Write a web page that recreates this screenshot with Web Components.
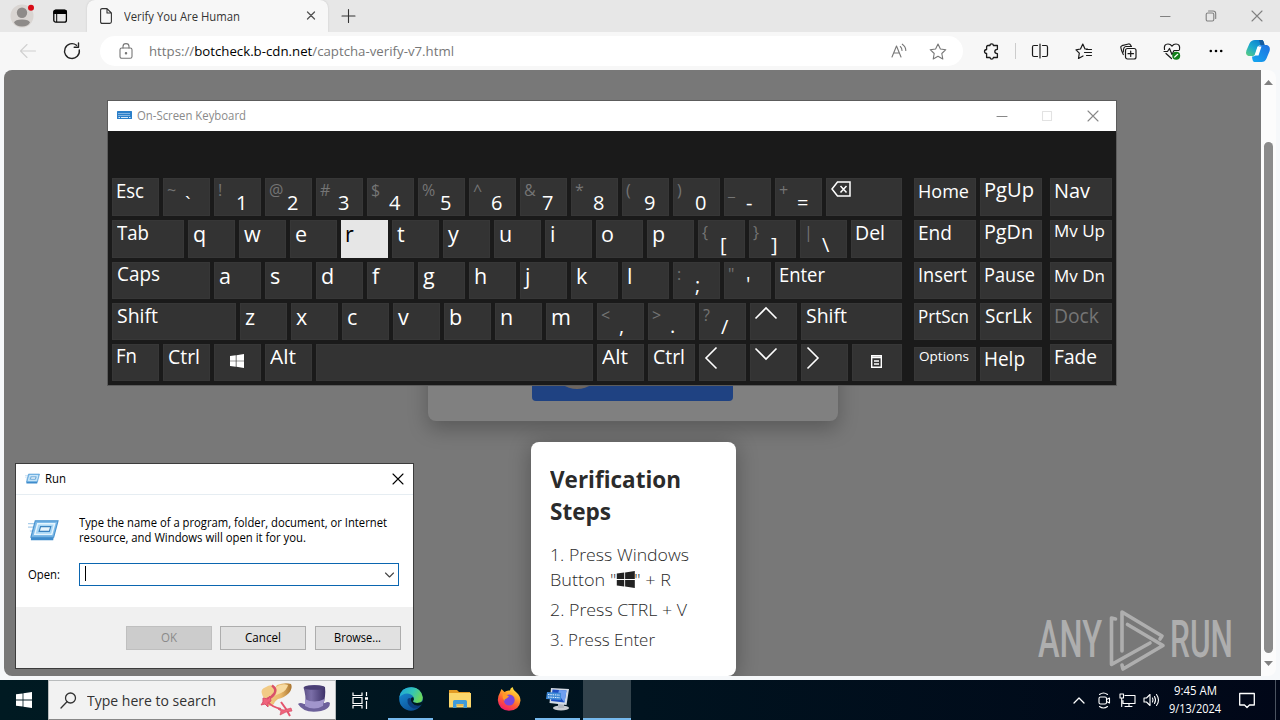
<!DOCTYPE html>
<html lang="en">
<head>
<meta charset="utf-8">
<title>Desktop</title>
<style>
  html, body { margin: 0; height: 100%; overflow: hidden; }
  body {
    width: 1280px; height: 720px;
    display: flex; flex-direction: column;
    background: #f7f7f7; color: #000;
    font-family: "Open Sans", "Noto Sans", sans-serif; font-size: 12px;
  }
</style>
</head>
<body>
<edge-tabs>Verify You Are Human</edge-tabs>
<edge-toolbar></edge-toolbar>
<page-view></page-view>
<task-bar></task-bar>

<on-screen-keyboard></on-screen-keyboard>
<run-dialog></run-dialog>
<brand-mark></brand-mark>

<script>
class Base extends HTMLElement {
  constructor() {
    super();
    this.attachShadow({ mode: "open" });
    this.shadowRoot.innerHTML = `
      <style>
        * { box-sizing: border-box; }
        svg { display: block; flex: none; overflow: visible; }
        .i { fill: none; stroke: currentColor; stroke-width: 1.1; stroke-linecap: round; stroke-linejoin: round; }
        ${this.css()}
      </style>${this.html()}`;
  }
  css() { return ""; }
  html() { return ""; }
}

const windowsLogo = (size, color) => `
  <svg width="${size}" height="${size}" viewBox="0 0 16 16" fill="${color}">
    <path d="M0 2.3 6.6 1.4V7.6H0zM7.4 1.3 16 0V7.6H7.4zM0 8.4H6.6V14.6L0 13.7zM7.4 8.4H16V16L7.4 14.7z"/>
  </svg>`;

/* Browser tab strip */
class EdgeTabs extends Base {
  css() {
    return `
      :host { display: flex; height: 32px; flex: none; background: #e7e7e7; align-items: center; color: #333; }
      .left { width: 87px; display: flex; align-items: center; padding-left: 9px; gap: 17px; }
      .tab {
        width: 241px; height: 32px; background: #f7f7f7; border-radius: 8px 8px 0 0;
        display: flex; align-items: center; padding: 0 12px 0 13px;
        box-shadow: 0 0 2px #c4c4c4; clip-path: inset(0 -3px 0 -3px);
      }
      .tab fit-text { margin-left: 12px; }
      .x { margin-left: auto; margin-right: -2px; color: #555; }
      .plus { margin-left: 13px; }
      .win { margin-left: auto; display: flex; padding-right: 17px; gap: 35px; color: #808080; }
    `;
  }
  html() {
    return `
      <div class="left">
        <svg width="26" height="26" viewBox="0 0 26 26">
          <circle cx="13" cy="13" r="11.5" fill="#d9d5d2"/>
          <circle cx="13" cy="9.8" r="5.2" fill="#8e8b89"/>
          <path d="M5 19.5q1-3 8-3t8 3q-2 4-8 4t-8-4z" fill="#8e8b89"/>
          <circle cx="22" cy="4.7" r="3" fill="#d80b16"/>
        </svg>
        <svg width="16" height="16" viewBox="0 0 16 16">
          <rect x="1.8" y="2.2" width="12.6" height="12" rx="2" fill="none" stroke="#000" stroke-width="1.3"/>
          <path d="M1.4 6V4q0-2.2 2.2-2.2H12.8Q15 1.800 15 4V6z"/><path d="M4.7 5V14" stroke="#000" stroke-width="1"/>
        </svg>
      </div>
      <div class="tab">
        <svg class="i" width="12" height="16" viewBox="0 0 12 16"><path d="M2.2.6H7L11.4 5V13.8Q11.4 15.4 9.8 15.4H2.2Q.6 15.4.6 13.8V2.2Q.6.6 2.2.6zM7 .8V5H11.2"/></svg>
        <fit-text w="116"><slot></slot></fit-text>
        <svg class="i x" width="14" height="14" viewBox="0 0 14 14" style="stroke-width:1.3"><path d="M3.500 3 10.500 10M10.500 3 3.500 10"/></svg>
      </div>
      <svg class="i plus" width="14" height="14" viewBox="0 0 14 14"><path d="M7.500 .5V13.500M1 7H14"/></svg>
      <div class="win">
        <svg class="i" width="11" height="12" viewBox="0 0 11 12"><path d="M.5 6.500H10"/></svg>
        <svg class="i" width="11" height="12" viewBox="0 0 11 12"><rect x=".2" y="3" width="7.600" height="8" rx="1.500"/><path d="M2.500 1H7Q9.700 1 9.700 3.700V8.500"/></svg>
        <svg class="i" width="11" height="12" viewBox="0 0 11 12"><path d="M0 1 10 11M10 1 0 11"/></svg>
      </div>`;
  }
}

/* Address bar row */
class EdgeToolbar extends Base {
  css() {
    return `
      :host { display: flex; height: 38px; flex: none; align-items: center; color: #222; background: #f7f7f7; }
      .nav { width: 100px; display: flex; align-items: center; padding-left: 19px; gap: 26px; }
      .pill {
        width: 863px; height: 30px; border-radius: 15px; background: #fff;
        display: flex; align-items: center; padding-left: 19px; color: #777; font-size: 13.5px;
      }
      .url { margin-left: 16px; }
      b { color: #000; font-weight: 400; }
      .aloud { margin-left: auto; margin-right: 22px; }
      .star { margin-right: 16px; }
      .tools { display: flex; align-items: center; padding-left: 10px; color: #1a1a1a; }
      .tools span { width: 36px; height: 24px; display: flex; align-items: center; justify-content: center; margin-right: 8px; }
      .tools .sep { width: 1px; height: 16px; background: #ccc; margin: 0 6px 0 -2px; }
      .tools .last { margin: 0 0 0 -2px; }
    `;
  }
  html() {
    return `
      <div class="nav">
        <svg class="i" width="18" height="16" viewBox="0 0 18 16" style="color:#d0d0d0"><path d="M16.500 8H1.500M8 1.500 1.500 8 8 14.500"/></svg>
        <svg class="i" width="18" height="18" viewBox="0 0 18 18" style="stroke-width:1.4"><path d="M16.300 8A7.400 7.400 0 1 1 13.500 3.200M15.500 1V5.300H11.200"/></svg>
      </div>
      <div class="pill">
        <svg class="i" width="14" height="16" viewBox="0 0 14 16"><rect x="1" y="5" width="12" height="10.300" rx="1.800"/><path d="M4 5V3.500Q4 .6 7 .6T10 3.500V5"/><circle cx="7" cy="10.200" r=".7" fill="currentColor"/></svg>
        <fit-text class="url" w="305">https://<b>botcheck.b-cdn.net</b>/captcha-verify-v7.html</fit-text>
        <svg class="i aloud" width="16" height="16" viewBox="0 0 16 16"><path d="M1 14 5.500 3 10 14M2.700 10H8.400M9.300 3.500Q11 5 11 7.500M11.300 1.200Q14.800 3.600 14.800 7.500"/></svg>
        <svg class="i star" width="18" height="17" viewBox="0 0 18 17"><path d="M9 1 11.400 6 16.800 6.700 12.800 10.500 13.800 16 9 13.300 4.200 16 5.200 10.500 1.200 6.700 6.600 6z"/></svg>
      </div>
      <div class="tools">
        <span><svg class="i" width="16" height="17" viewBox="0 0 16 17" style="stroke-width:1.300"><path d="M5 2.500H7Q7 .9 8.700.9T10.400 2.500H14.400V6.300Q11.800 6.500 11.800 8.500T14.400 10.700V14.500H10.400Q10.200 16.100 8.700 16.100T7 14.500H3.600V10.500Q1.500 10.300 1.500 8.500T3.600 6.500V4Q3.600 2.500 5 2.500z"/></svg></span>
        <span class="sep"></span>
        <span><svg class="i" width="17" height="16" viewBox="0 0 17 16" style="stroke-width:1.200"><path d="M8 1V15M5.500 2.500H2Q.5 2.500.5 4V12Q.5 13.500 2 13.500H5.500M10.500 2.500H14Q15.500 2.500 15.500 4V12Q15.500 13.500 14 13.500H10.500"/></svg></span>
        <span><svg class="i" width="18" height="17" viewBox="0 0 18 17" style="stroke-width:1.200"><path d="M12.500 6 10 6 7.800 1 5.500 6 1 6.800 4.300 10.200 3.500 15.500 8 13M11.500 6.500H16.500M9.500 9.500H16.500M11.500 12.500H16.500"/></svg></span>
        <span><svg class="i" width="17" height="17" viewBox="0 0 17 17" style="stroke-width:1.200"><rect x="5.500" y="5.500" width="10.500" height="10.500" rx="2"/><path d="M10.700 8V13.500M8 10.700H13.500M3.300 11.500Q1.500 8.500.8 4.500.5 3.200 2 2.700L8.500 1Q10 .8 10.700 2.200L11.300 3.500M3.300 9Q3.300 3.500 6 3.500H11.500"/></svg></span>
        <span><svg class="i" width="18" height="17" viewBox="0 0 18 17" style="stroke-width:1.200"><path d="M1.500 6.500Q.6 1 5 1 7.500 1 9 3.200 10.500 1 13 1 17.400 1 16.500 6.500M1 8.500H4.500L6.500 5.500 9 11.500 11 7.500H16M3 10.500 8.500 15.500"/><circle cx="13.200" cy="12.700" r="4" fill="#12801a" stroke="none"/><path d="M11.700 14 14.700 11.300" stroke="#fff"/></svg></span>
        <span><svg width="14" height="4" viewBox="0 0 14 4"><circle cx="1.800" cy="2" r="1.300"/><circle cx="7" cy="2" r="1.300"/><circle cx="12.200" cy="2" r="1.300"/></svg></span>
        <span class="last"><svg width="24" height="22" viewBox="0 0 24 22">
          <defs>
            <linearGradient id="a" x1="0" y1="1" x2=".8" y2="0"><stop stop-color="#5fd07a"/><stop offset=".5" stop-color="#1ba9cf"/><stop offset="1" stop-color="#087bd0"/></linearGradient>
            <linearGradient id="b" x1="0" y1="1" x2="1" y2="0"><stop stop-color="#14a9f0"/><stop offset="1" stop-color="#1f6fe0"/></linearGradient>
          </defs>
          <path d="M9 0H16Q17.500 0 18.500 5H14.500Q12.500 5 11.500 8L9.500 14Q8.500 16.500 6 16H2.500Q-.8 15 .4 10.500L3.500 3.500Q5 0 9 0z" fill="url(#a)"/>
          <path d="M15.500 22H8.500Q6.500 22 6 16.500 9 17 10 14L12 8Q13 5 15.500 5H21Q24.800 6.500 23.600 11L20.500 18.500Q19 22 15.500 22z" fill="url(#b)"/>
          <path d="M11.500 6.500H15.500L12.500 15.500H8.500z" fill="#fff"/>
          <path d="M13 0H16Q17.500 0 18.500 5H14.500z" fill="#155b9e"/>
        </svg></span>
      </div>`;
  }
}

/* Web page with its dimmed backdrop and the scrollbar */
class PageView extends Base {
  css() {
    return `
      :host { display: flex; flex: 1; height: 610px; padding: 0 4px 4px; background: #f6f8fa; }
      .page {
        width: 1257px; height: 606px; background: #787878; border-radius: 8px 0 0 8px; overflow: hidden;
        display: flex; flex-direction: column; align-items: center;
      }
      .card {
        width: 410px; height: 300px; margin-top: 51px; flex: none; border-radius: 8px; background: #808080;
        box-shadow: 0 8px 20px rgba(0,0,0,.25); display: flex; align-items: flex-end; justify-content: center; padding-bottom: 20px;
      }
      .btn { width: 201px; height: 46px; margin-left: -1px; border-radius: 4px; background: #1f4282; padding: 1px 24px; }
      .btn i { display: block; width: 42px; height: 33px; border-radius: 50%; border: 3px solid #6d6660; }
      .steps {
        width: 205px; height: 234px; margin: 21px 0 0 1px; flex: none; border-radius: 8px; background: #fff; color: #2b2b2b;
        box-shadow: 0 3px 22px rgba(0,0,0,.3); padding: 21px 19px;
      }
      h2 { margin: 0 0 15px; font-size: 23px; line-height: 32px; }
      h2 fit-text, p fit-text { display: block; }
      p { margin: 0 0 5px; font-size: 17px; line-height: 25px; font-weight: 300; }
      .logo { display: inline-block; vertical-align: -2px; margin: 0; }
      .bar {
        width: 15px; height: 606px; background: #fcfcfc; border-radius: 0 8px 8px 0; display: flex; flex-direction: column; align-items: center;
        padding: 10px 0 9px;
      }
      .thumb { width: 9px; height: 511px; border-radius: 5px; background: #8b8b8b; margin: 56px 0 7px; }
    `;
  }
  html() {
    return `
      <div class="page">
        <div class="card"><div class="btn"><i></i></div></div>
        <div class="steps">
          <h2><fit-text w="131">Verification</fit-text><fit-text w="61">Steps</fit-text></h2>
          <p><fit-text w="139">1. Press Windows</fit-text><fit-text w="121">Button "<span class="logo">${windowsLogo(17, "#222")}</span>" + R</fit-text></p>
          <p><fit-text w="137">2. Press CTRL + V</fit-text></p>
          <p><fit-text w="105">3. Press Enter</fit-text></p>
        </div>
      </div>
      <div class="bar">
        <svg width="9" height="6" viewBox="0 0 9 6" fill="#808080"><path d="M0 5 4.500 0 9 5z"/></svg>
        <div class="thumb"></div>
        <svg width="9" height="6" viewBox="0 0 9 6" fill="#808080"><path d="M0 1H9L4.500 6z"/></svg>
      </div>`;
  }
}

/* One key. base = distance from the key's top to the text baseline */
class OskKey extends HTMLElement {
  constructor() {
    super();
    this.attachShadow({ mode: "open" });
  }
  connectedCallback() {
    const get = (n, d) => this.getAttribute(n) || d;
    const shift = this.getAttribute("shift");
    this.shadowRoot.innerHTML = `
      <style>
        :host {
          display: grid; grid-template: 100% / 100%; flex: none; width: ${get("width", 47)}px; height: 100%;
          background: #333; color: #fff; box-shadow: inset 0 0 0 1px #373737; box-sizing: border-box;
        }
        :host([down]) { background: #e6e6e6; color: #000; box-shadow: none; }
        :host([dim]) { color: #757575; }
        :host([low]) { margin-top: 3px; height: calc(100% - 3px); }
        div { grid-area: 1 / 1; line-height: 20px; white-space: nowrap; height: 20px; }
        .main {
          font-size: ${get("size", 20)}px; padding-left: ${get("x", 4)}px;
          margin-top: calc(${get("base", 21)}px - 10px - .388em);
        }
        .shift { font-size: 16px; color: #757575; padding-left: 4px; margin-top: calc(${get("sbase", 18)}px - 10px - .388em); }
      </style>
      ${shift ? `<div class="shift"></div>` : ""}<div class="main"><slot></slot></div>`;
    if (shift) this.shadowRoot.querySelector(".shift").textContent = shift;
  }
}

const esc = s => s.replace(/&/g, "&amp;").replace(/</g, "&lt;").replace(/"/g, "&quot;");
const word = (t, width, w, attrs = "") => `<osk-key width="${width}" ${attrs}><fit-text w="${w}">${t}</fit-text></osk-key>`;
const letters = (s, down) => [...s].map(c =>
  `<osk-key size="21.500" base="22" x="${c === down ? 4 : 5}" ${c === down ? "down" : ""}>${c}</osk-key>`).join("");
const dual = (s, c, attrs = 'base="33"') => `<osk-key shift="${esc(s)}" x="22" ${attrs}>${esc(c)}</osk-key>`;
const icon = (w, h, d, x, y, width = 47, sw = 1.600) => `
  <osk-key width="${width}" x="${x}" base="${y + 18}"><svg width="${w}" height="${h}" viewBox="0 0 ${w} ${h}" style="display:block" fill="none" stroke="#fff" stroke-width="${sw}"><path d="${d}"/></svg></osk-key>`;
const side = (a, b, c) => `<i style="width:8px"></i>${a}${b}<i style="width:4px"></i>${c}`;

const rows = [
  word("Esc", 47, 28) +
  dual("~", "`", 'base="34"') +
  ["!1", "@2", "#3", "$4", "%5", "^6", "&7", "*8", "(9", ")0"].map(p => dual(p[0], p[1])).join("") +
  dual("_", "-") + dual("+", "=") +
  icon(20, 16, "M6.500 1H19V15H6.500L1 8zM9.500 5 15.500 11.500M15.500 5 9.500 11.500", 5, 3, 76, 1.500) +
  side(word("Home", 62, 51, 'size="19" base="20"'), word("PgUp", 62, 50, 'base="20"'), word("Nav", 62, 36)),

  word("Tab", 72, 32, 'x="5"') + letters("qwertyuiop", "r") +
  dual("{", "[") + dual("}", "]") + dual("|", "\\") + word("Del", 51, 30) +
  side(word("End", 62, 34), word("PgDn", 62, 49, 'base="20"'), word("Mv Up", 62, 51, 'size="17" base="18"')),

  word("Caps", 98, 43, 'base="20" x="5"') + letters("asdfghjkl") +
  dual(":", ";", 'base="31"') + dual('"', "'", 'base="30"') + word("Enter", 127, 46) +
  side(word("Insert", 62, 49), word("Pause", 62, 51), word("Mv Dn", 62, 51, 'size="17" base="21"')),

  word("Shift", 124, 41, 'x="5"') + letters("zxcvbnm") +
  dual("<", ",", 'base="31"') + dual(">", ".", 'base="31"') + dual("?", "/", 'base="32"') +
  icon(22, 12, "M.5 11.500 11 1 21.500 11.500", 5, 4) + word("Shift", 101, 41, 'x="5"') +
  side(word("PrtScn", 62, 51, 'size="17.500" base="20"'), word("ScrLk", 62, 47, 'x="5"'), word("Dock", 62, 45, "dim")),

  word("Fn", 47, 21, 'base="20"') + word("Ctrl", 47, 32, 'x="5"') +
  `<osk-key x="16" base="28">${windowsLogo(14, "#fff")}</osk-key>` +
  word("Alt", 47, 26, 'x="5"') + `<osk-key width="277"></osk-key>` + word("Alt", 47, 26, 'x="5"') + word("Ctrl", 47, 32, 'x="5"') +
  icon(12, 22, "M11.500 .5 1 11 11.500 21.500", 6, 3) +
  icon(22, 12, "M.5 .5 11 11 21.500 .5", 5, 4) +
  icon(12, 22, "M.5 .5 11 11 .5 21.500", 6, 3) +
  icon(11, 13, "M.7 .7H10.300V12.300H.7zM.7 2.500H10.300M3 6H8M3 9H8", 19, 11, 50, 1.400) +
  side(word("Options", 62, 50, 'size="13.500" base="14" x="5" low'), word("Help", 62, 41, 'base="20" low'), word("Fade", 62, 43))
];
const heights = [38, 38, 37, 37, 37];

class OnScreenKeyboard extends Base {
  css() {
    return `
      :host {
        position: absolute; left: 108px; top: 101px; width: 1008px; height: 284px; background: #1a1a1a;
        display: flex; flex-direction: column; box-shadow: 0 0 0 1px #5c5c5c;
      }
      header { height: 30px; flex: none; background: #fff; display: flex; align-items: center; padding: 0 17px 2px 9px; color: #8a8a8a; }
      header fit-text { margin-left: 5px; }
      .win { margin-left: auto; display: flex; gap: 34px; color: #888; padding-top: 1px; }
      main { display: grid; grid-template-rows: ${heights.map(h => h + "px").join(" ")}; gap: 4px; padding: 47px 0 0 4px; }
      .row { display: flex; gap: 4px; }
      .row i { margin-right: -4px; }
    `;
  }
  html() {
    return `
      <header>
        <svg width="15" height="8" viewBox="0 0 15 8"><rect width="15" height="8" rx=".5" fill="#2b7fc9"/><path d="M1.500 2.500H13.500M1.500 4.500H13.500" stroke="#d8ebfa" stroke-dasharray="1 1"/><path d="M1.500 6.500H3M4 6.500H11M12 6.500H13.500" stroke="#d8ebfa"/></svg>
        <fit-text w="109">On-Screen Keyboard</fit-text>
        <div class="win">
          <svg class="i" width="12" height="12" viewBox="0 0 12 12"><path d="M2 6.500H12"/></svg>
          <svg class="i" width="12" height="12" viewBox="0 0 12 12" style="color:#e2e2e2"><rect x="1.500" y="1.500" width="9" height="9"/></svg>
          <svg class="i" width="12" height="12" viewBox="0 0 12 12"><path d="M1 1 11 11M11 1 1 11"/></svg>
        </div>
      </header>
      <main>${rows.map(r => `<div class="row">${r}</div>`).join("")}</main>`;
  }
}

const runIcon = (w, h) => `
  <svg width="${w}" height="${h}" viewBox="0 0 32 22">
    <path d="M0 4.500H7M0 8H6M2 12H5" stroke="#a9cdea" stroke-width="1.200"/>
    <path d="M7.500 1.500H31L26.500 18.500H3z" fill="#7fbbe8" stroke="#4a94d0" stroke-width="1.200"/>
    <path d="M3 18.500H26.500L26 21.500H3z" fill="#3f8ccc"/>
    <path d="M10 4.500H27.500L24.500 15.500H7z" fill="#a9d7f5" stroke="#e6f5fe" stroke-width="1.500"/>
    <path d="M13 7.500H23.500L22 12.500H11.500z" fill="#e9f4fb" stroke="#3b83c0" stroke-width="1.200"/>
  </svg>`;

class WinButton extends Base {
  css() {
    return `
      :host {
        display: flex; width: 86px; height: 24px; box-sizing: border-box; align-items: center; justify-content: center;
        background: #e1e1e1; border: 1px solid #adadad; padding: 0 2px 1px 0;
      }
      :host([disabled]) { background: #ccc; border-color: #bfbfbf; color: #8a8a8a; }
    `;
  }
  html() { return `<slot></slot>`; }
}

class RunDialog extends Base {
  css() {
    return `
      :host {
        position: absolute; left: 15px; top: 463px; width: 399px; height: 206px; box-sizing: border-box;
        border: 1px solid #3c3c3c; background: #fff; display: flex; flex-direction: column;
      }
      header { height: 31px; border-bottom: 1px solid #e6edf2; display: flex; align-items: center; padding: 0 9px 1px; flex: none; }
      header fit-text { margin-left: 5px; }
      header .i { margin-left: auto; }
      main { height: 112px; display: grid; grid-template-columns: 51px 320px; align-items: center; align-content: start; padding: 19px 0 0 12px; row-gap: 17px; }
      p { margin: 1px 0 1px; line-height: 15px; display: flex; flex-direction: column; }
      .field { height: 23px; border: 1px solid #0b66b0; display: flex; align-items: center; justify-content: space-between; padding: 0 4px 0 5px; }
      .caret { width: 1px; height: 15px; background: #000; margin-top: -2px; }
      footer { flex: 1; background: #f0f0f0; display: flex; justify-content: flex-end; align-items: flex-start; gap: 8px; padding: 19px 12px 0; }
      footer :last-child { margin-left: 1px; }
      footer fit-text { margin: 0; }
    `;
  }
  html() {
    return `
      <header>${runIcon(15, 11)}<fit-text w="21">Run</fit-text>
        <svg class="i" width="12" height="12" viewBox="0 0 12 12"><path d="M1 1 11 11M11 1 1 11"/></svg></header>
      <main>
        ${runIcon(31, 22)}
        <p><fit-text w="308">Type the name of a program, folder, document, or Internet</fit-text><fit-text w="227">resource, and Windows will open it for you.</fit-text></p>
        <fit-text w="32">Open:</fit-text>
        <div class="field"><div class="caret"></div><svg class="i" width="9" height="6" viewBox="0 0 9 6" style="color:#444"><path d="M.5 1 4.500 5 8.500 1"/></svg></div>
      </main>
      <footer>
        <win-button disabled><fit-text w="16">OK</fit-text></win-button>
        <win-button><fit-text w="36">Cancel</fit-text></win-button>
        <win-button><fit-text w="47">Browse...</fit-text></win-button>
      </footer>`;
  }
}

/* Watermark in the corner of the page */
class BrandMark extends Base {
  css() {
    return `
      :host {
        position: absolute; left: 1038px; top: 608px; width: 195px; height: 64px; display: flex; align-items: center;
        color: #aeaeae; font-family: Roboto, sans-serif; font-size: 52px; font-weight: 500; line-height: 66px;
      }
      svg { margin: 0 6px 0 7px; }
    `;
  }
  html() {
    return `
      <fit-text w="64">ANY</fit-text>
      <svg width="55" height="62" viewBox="0 0 55 62" fill="none" stroke="#aeaeae" stroke-width="3.600" stroke-linejoin="round" stroke-linecap="round">
        <path d="M13 42V3L53 27 51 30"/>
        <path d="M18.500 15.500 54 36.500 14 60 13 56"/>
        <path d="M6.500 10 2.500 9V55.500L41 34"/>
      </svg>
      <fit-text w="63">RUN</fit-text>`;
  }
}

class TaskBar extends Base {
  css() {
    return `
      :host {
        display: flex; height: 40px; flex: none; color: #fff;
        background: linear-gradient(90deg, #001a22, #00131f 50%, #010718);
      }
      .cell { width: 48px; height: 40px; display: flex; align-items: center; justify-content: center; }
      .search {
        width: 288px; background: #f2f2f2; border: 1px solid #b9bcbd; border-bottom-color: #888; color: #333; font-size: 15px;
        display: flex; align-items: center; padding-left: 11px;
      }
      .search fit-text { margin-left: 10px; }
      .hats { margin-left: auto; margin-right: 4px; }
      .app { width: 49px; border-bottom: 2px solid transparent; }
      .run { border-image: linear-gradient(90deg, transparent 4px, #76b9ed 4px, #76b9ed 45px, transparent 45px) 2; border-width: 0 0 2px; border-style: solid; }
      .on { width: 48px; margin-left: 1px; background: #33434c; border-bottom: 2px solid #76b9ed; }
      .tray { margin-left: auto; display: flex; align-items: center; }
      .clock { display: flex; flex-direction: column; align-items: center; line-height: 18px; margin: 0 18px 0 9px; }
      .show { width: 1px; height: 40px; background: #4b5360; margin: 0 4px 0 20px; }
    `;
  }
  html() {
    return `
      <div class="cell">${windowsLogo(16, "#fff")}</div>
      <div class="search">
        <svg class="i" width="17" height="17" viewBox="0 0 17 17" style="stroke-width:1.300"><circle cx="10.500" cy="6" r="5"/><path d="M7 9.700 1 16"/></svg>
        <fit-text w="129">Type here to search</fit-text>
        <svg class="hats" width="71" height="32" viewBox="0 0 71 32">
          <defs>
            <linearGradient id="h" x1="0" x2="1"><stop stop-color="#5c5085"/><stop offset=".35" stop-color="#7b6fa8"/><stop offset="1" stop-color="#3d3268"/></linearGradient>
            <linearGradient id="s" x1="0" x2="1"><stop stop-color="#f3cf8f"/><stop offset=".6" stop-color="#e9b768"/><stop offset="1" stop-color="#a8742f"/></linearGradient>
          </defs>
          <path d="M17 1Q25-2 31 0 33 4 29 9 24 14 18 15 14 18 14 20 9 24 5 20 4 16 9 12z" fill="url(#s)"/>
          <path d="M16 3Q22-1 28 1 27 6 21 9L14 12z" fill="#f7dba2"/>
          <path d="M2 10Q0 5 6 3 10 0 14 2 19 5 16 10L8 15Q3 15 2 10z" fill="#f2cb86"/>
          <path d="M12 1.500Q17 5 14.500 9.500 12 13.500 7 15" fill="none" stroke="#d9506a" stroke-width="2.400"/>
          <path d="M3 14 8 15 10 12 11 17 8 19 8 23 5 20 1 21 3 18z" fill="#f0647c" stroke="#d9506a"/>
          <path d="M8 18Q12 23 21 25M21 18 26 25 30 32" fill="none" stroke="#e4536c" stroke-width="2"/>
          <path d="M18 25 24 26 31 24 32 27 26 28 20 31 21 27z" fill="#f0647c" stroke="#d9506a" stroke-width=".7"/>
          <path d="M38 20Q40 18 44 20L65 19Q68 17 70 19 70 25 61 27 44 30 38 20z" fill="#6c609a"/>
          <path d="M43.500 3.500Q53-1 65 3Q66 12 63 22 54 26 45.500 21 46 11 43.500 3.500z" fill="url(#h)"/>
          <path d="M45 15Q54 20 64.500 15L63 22Q54 27 45 22z" fill="#a195cc"/>
          <ellipse cx="54.300" cy="3.500" rx="10.500" ry="2.300" fill="#4a3f74"/>
        </svg>
      </div>
      <div class="cell"><svg width="17" height="17" viewBox="0 0 17 17" fill="none" stroke="#fff" stroke-width="1.200"><path d="M1 .5V3.500H10V.5M1 16.500V13.500H10V16.500M1 5.500H10V11.500H1zM14.500 0V4M14.500 9V17"/><path d="M13 6.500H16" stroke-width="2.500"/></svg></div>
      <div class="cell app run" style="margin-left:2px"><svg width="24" height="24" viewBox="0 0 24 24">
        <defs>
          <linearGradient id="e1" x1="0" y1="0" x2="1" y2=".4"><stop stop-color="#1b9fe0"/><stop offset=".6" stop-color="#34c6b4"/><stop offset="1" stop-color="#6ad75e"/></linearGradient>
          <linearGradient id="e2" x1="0" y1="0" x2=".6" y2="1"><stop stop-color="#1994dc"/><stop offset="1" stop-color="#0c4f96"/></linearGradient>
        </defs>
        <circle cx="12" cy="12" r="11.800" fill="url(#e2)"/>
        <path d="M.3 10.500Q1.500.2 12.500.2 22.500.8 23.800 10.500 23.800 16 18 16 14.500 16 14 14.300 15.800 12.500 14.500 10 12.500 6.500 8 6.500 3 6.800.3 10.500z" fill="url(#e1)"/>
        <path d="M8.500 12.500Q8 19 14.500 21.500 19.500 22 22.500 18 19 19.500 15.500 18 11.500 16.500 12 11.500 9.500 10 8.500 12.500z" fill="#0b3c7c"/>
        <path d="M14 14.300Q15.500 12.500 14.500 10.500 13 9.500 12 11.500 11.500 16 15.500 18 19 19.500 22.500 18 23.500 16 24 14 22 16 18 16 14.500 16 14 14.300z" fill="#001a22"/>
      </svg></div>
      <div class="cell app"><svg width="22" height="20" viewBox="0 0 22 20">
        <path d="M0 1H8L10 3H21V6H0z" fill="#e39b25"/><rect y="4" width="22" height="14.500" fill="#fbd66b"/>
        <path d="M4 19V12.500Q4 11 5.500 11H16.500Q18 11 18 12.500V19H14.500V15H7.500V19z" fill="#3f9bd9"/><rect x="8" y="15" width="6" height="2" fill="#e9b850"/>
      </svg></div>
      <div class="cell app"><svg width="24" height="24" viewBox="0 0 24 24">
        <defs>
          <linearGradient id="f1" x1=".8" y1="0" x2=".3" y2="1"><stop stop-color="#fff04a"/><stop offset=".35" stop-color="#ffa72b"/><stop offset=".65" stop-color="#ff5a36"/><stop offset="1" stop-color="#f0186f"/></linearGradient>
        </defs>
        <path d="M3 5.500 4.500 2 7.500 5Q10 3 13 3.500 13 1 15.500 0 16 3 19.500 5.500 23.500 9 23.500 13.500 22.500 23.500 12 23.800 1.500 23 .8 13 .8 9 3 5.500z" fill="url(#f1)"/>
        <circle cx="12.200" cy="13" r="5.500" fill="#7a46dc"/>
        <path d="M5.500 7Q9 6.500 12 9.500L9.500 11.500Q7 12 7.500 14.500 5 11 5.500 7z" fill="#ff9b26"/>
      </svg></div>
      <div class="cell app run"><svg width="24" height="24" viewBox="0 0 24 24">
        <ellipse cx="15" cy="21" rx="8" ry="2.500" fill="#c9ccd2"/><path d="M12 16H18V21H12z" fill="#b2b7c0"/>
        <path d="M5 1 23 2 20.500 18 3.500 16z" fill="#d4dbe5"/><path d="M6.500 2.500 20.500 3.500 18.500 15.500 5 14z" fill="#1e50c4"/><path d="M13 3 20.500 3.500 18.500 15.500 12 7z" fill="#6f9ff0"/>
        <path d="M1 5 15 6V13L0 12z" fill="#3f8ad6"/><path d="M2 7.500 14 8.200M2 10 14 10.800" stroke="#e6f2ff" stroke-dasharray="1.500 .8"/>
      </svg></div>
      <div class="cell on"></div>
      <div class="tray">
        <svg class="i" width="12" height="7" viewBox="0 0 12 7" style="stroke-width:1.300"><path d="M1 6 6 1 11 6"/></svg>
        <svg class="i" width="13" height="17" viewBox="0 0 13 17" style="margin-left:13px"><rect x="1" y="5" width="7.500" height="7" rx="1.500"/><path d="M8.500 7.500 11.500 6V11L8.500 9.500M1.500 2.500Q5.500-.5 9.500 2.500M1.500 14.500Q5.500 17.500 9.500 14.500"/></svg>
        <svg class="i" width="17" height="15" viewBox="0 0 17 15" style="margin-left:8px"><path d="M6 2.500H16V10.500H4V7.500M10 10.500V13.500M6 13.500H13M1 1H4.500V5H1zM2.700 5V13.500"/></svg>
        <svg class="i" width="17" height="14" viewBox="0 0 17 14" style="margin-left:7px"><path d="M1 5H3.500L7 1.500V12.500L3.500 9H1zM9.500 5Q10.500 7 9.500 9M11.500 3.500Q13.500 7 11.500 10.500M13.500 1.500Q17.500 7 13.500 12.500"/></svg>
        <div class="clock"><fit-text w="43">9:45 AM</fit-text><fit-text w="52">9/13/2024</fit-text></div>
        <svg class="i" width="16" height="17" viewBox="0 0 16 17" style="stroke-width:1.300"><path d="M.7 1.500H15.300V13H10.500L8 15.500 5.500 13H.7z"/></svg>
        <div class="show"></div>
      </div>`;
  }
}

/* Single line of text set to an exact width */
class FitText extends HTMLElement {
  constructor() {
    super();
    this.attachShadow({ mode: "open" });
    this.shadowRoot.innerHTML = `
      <style>
        :host { display: inline-block; white-space: nowrap; flex: none; }
        .t { display: inline-block; transform-origin: 0 50%; }
      </style><span class="t"><slot></slot></span>`;
  }
  connectedCallback() {
    const w = Number(this.getAttribute("w"));
    const t = this.shadowRoot.querySelector(".t");
    this.style.width = w + "px";
    const natural = t.getBoundingClientRect().width;
    if (natural) t.style.transform = `scaleX(${w / natural})`;
  }
}

customElements.define("osk-key", OskKey);
customElements.define("win-button", WinButton);
customElements.define("edge-tabs", EdgeTabs);
customElements.define("edge-toolbar", EdgeToolbar);
customElements.define("page-view", PageView);
customElements.define("on-screen-keyboard", OnScreenKeyboard);
customElements.define("run-dialog", RunDialog);
customElements.define("brand-mark", BrandMark);
customElements.define("task-bar", TaskBar);
customElements.define("fit-text", FitText);
</script>
</body>
</html>
